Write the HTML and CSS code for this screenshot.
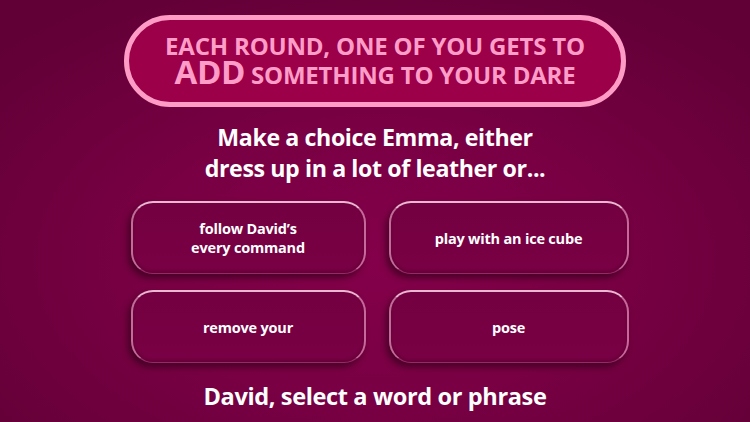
FILE: index.html
```
<!DOCTYPE html>
<html>
<head>
<meta charset="utf-8">
<link rel="stylesheet" href="styles.css">
</head>
<body>
<div class="screen">
  <div class="banner">
    <div class="banner-line">EACH ROUND, ONE OF YOU GETS TO</div>
    <div class="banner-line second"><span class="big">ADD</span> SOMETHING TO YOUR DARE</div>
  </div>
  <div class="prompt">
    <div>Make a choice Emma, either</div>
    <div>dress up in a lot of leather or...</div>
  </div>
  <div class="grid">
    <div class="choice"><span>follow David’s<br>every command</span></div>
    <div class="choice"><span>play with an ice cube</span></div>
    <div class="choice"><span>remove your</span></div>
    <div class="choice"><span>pose</span></div>
  </div>
  <div class="footer">David, select a word or phrase</div>
</div>
</body>
</html>
```
FILE: styles.css
```
html, body {
  margin: 0;
  padding: 0;
}
body {
  width: 750px;
  height: 422px;
  overflow: hidden;
  font-family: "Open Sans", "Lato", sans-serif;
  font-weight: 700;
}
.screen {
  width: 750px;
  height: 422px;
  box-sizing: border-box;
  display: flex;
  flex-direction: column;
  align-items: center;
  background: radial-gradient(ellipse 70% 75% at 50% 62%, #84004a 0%, #780043 45%, #600036 100%);
  padding-top: 15px;
}
.banner {
  width: 502px;
  height: 92px;
  box-sizing: border-box;
  border: 5px solid #ff9cc6;
  border-radius: 46px;
  background: #9b0049;
  color: #ff9dc8;
  display: flex;
  flex-direction: column;
  align-items: center;
  justify-content: center;
  padding-bottom: 1px;
}
.banner-line {
  font-size: 24px;
  line-height: 25px;
  letter-spacing: -0.2px;
  white-space: nowrap;
}
.banner-line.second {
  line-height: 27px;
}
.banner-line .big {
  font-size: 33px;
  line-height: 27px;
  letter-spacing: -0.4px;
}
.prompt {
  margin-top: 15px;
  color: #ffffff;
  font-size: 23.2px;
  line-height: 31px;
  text-align: center;
  letter-spacing: -0.4px;
}
.grid {
  margin-top: 17px;
  display: grid;
  grid-template-columns: 235px 240px;
  column-gap: 23px;
  row-gap: 16px;
  margin-left: 9px;
}
.choice {
  height: 73px;
  box-sizing: border-box;
  border-radius: 22px;
  background: linear-gradient(180deg, #730041 0%, #790044 100%);
  border-top: 2px solid rgba(255, 215, 235, 0.85);
  border-left: 2px solid rgba(255, 200, 225, 0.55);
  border-right: 2px solid rgba(235, 150, 195, 0.7);
  border-bottom: 1px solid rgba(200, 110, 160, 0.4);
  box-shadow: -3px 4px 6px rgba(40, 0, 20, 0.6), inset 0 -2px 3px rgba(40, 0, 20, 0.25);
  display: flex;
  align-items: center;
  justify-content: center;
  color: #ffffff;
  font-size: 14.5px;
  line-height: 19px;
  text-align: center;
  letter-spacing: -0.2px;
}
.footer {
  margin-top: 18px;
  color: #ffffff;
  font-size: 23.6px;
  line-height: 30px;
  letter-spacing: -0.4px;
}
```
